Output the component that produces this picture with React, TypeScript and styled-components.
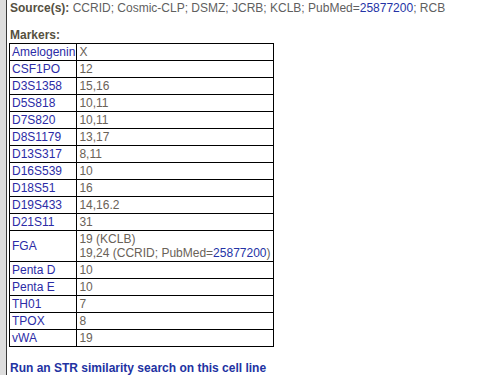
import React from 'react';
import styled, { createGlobalStyle } from 'styled-components';

const GlobalStyle = createGlobalStyle`
  html, body {
    margin: 0;
    padding: 0;
    background: #ffffff;
  }
  body {
    font-family: 'Liberation Sans', Arial, sans-serif;
  }
`;

// Page frame: grey gutter on the left, dark rule, then content
const Frame = styled.div`
  display: flex;
  min-height: 375px;
  overflow: hidden;
`;

const Gutter = styled.div`
  width: 6px;
  flex: none;
  background-color: #dedede;
  border-right: 1px solid #3a3a3a;
`;

const Content = styled.div`
  flex: 1;
  padding: 1px 0 0 3px;
`;

const Line = styled.p`
  margin: 0;
  font-size: 12px;
  line-height: 14px;
  color: #5f5f5f;
`;

const Label = styled.b`
  color: #55503f;
`;

const Spacer = styled.div`
  height: 13px;
`;

const Link = styled.a`
  color: #2433a6;
  text-decoration: none;
`;

const Table = styled.table`
  border-collapse: collapse;
  width: 265px;
  margin: 1px 0 0 -1px;
  font-size: 12px;
  border: 1px solid #000;
`;

const Cell = styled.td<{ $name?: boolean }>`
  border: 1px solid #000;
  padding: 1px 1px 1px 2px;
  line-height: 14px;
  color: ${p => (p.$name ? '#2b2ba6' : '#6a6258')};
  white-space: nowrap;
  width: ${p => (p.$name ? '1%' : 'auto')};
`;

const Search = styled.a`
  display: block;
  margin-top: 14px;
  font-size: 12px;
  font-weight: bold;
  color: #2232a2;
  text-decoration: none;
`;

type Row = { name: string; value: React.ReactNode };

const rows: Row[] = [
  { name: 'Amelogenin', value: 'X' },
  { name: 'CSF1PO', value: '12' },
  { name: 'D3S1358', value: '15,16' },
  { name: 'D5S818', value: '10,11' },
  { name: 'D7S820', value: '10,11' },
  { name: 'D8S1179', value: '13,17' },
  { name: 'D13S317', value: '8,11' },
  { name: 'D16S539', value: '10' },
  { name: 'D18S51', value: '16' },
  { name: 'D19S433', value: '14,16.2' },
  { name: 'D21S11', value: '31' },
  {
    name: 'FGA',
    value: (
      <>
        19 (KCLB)
        <br />
        19,24 (CCRID; PubMed=<Link href="#">25877200</Link>)
      </>
    ),
  },
  { name: 'Penta D', value: '10' },
  { name: 'Penta E', value: '10' },
  { name: 'TH01', value: '7' },
  { name: 'TPOX', value: '8' },
  { name: 'vWA', value: '19' },
];

const App: React.FC = () => (
  <>
    <GlobalStyle />
    <Frame>
      <Gutter />
      <Content>
        <Line>
          <Label>Source(s):</Label> CCRID; Cosmic-CLP; DSMZ; JCRB; KCLB; PubMed=
          <Link href="#">25877200</Link>; RCB
        </Line>
        <Spacer />
        <Line>
          <Label>Markers:</Label>
        </Line>
        <Table>
          <tbody>
            {rows.map(r => (
              <tr key={r.name}>
                <Cell $name>{r.name}</Cell>
                <Cell>{r.value}</Cell>
              </tr>
            ))}
          </tbody>
        </Table>
        <Search href="#">Run an STR similarity search on this cell line</Search>
      </Content>
    </Frame>
  </>
);

export default App;
